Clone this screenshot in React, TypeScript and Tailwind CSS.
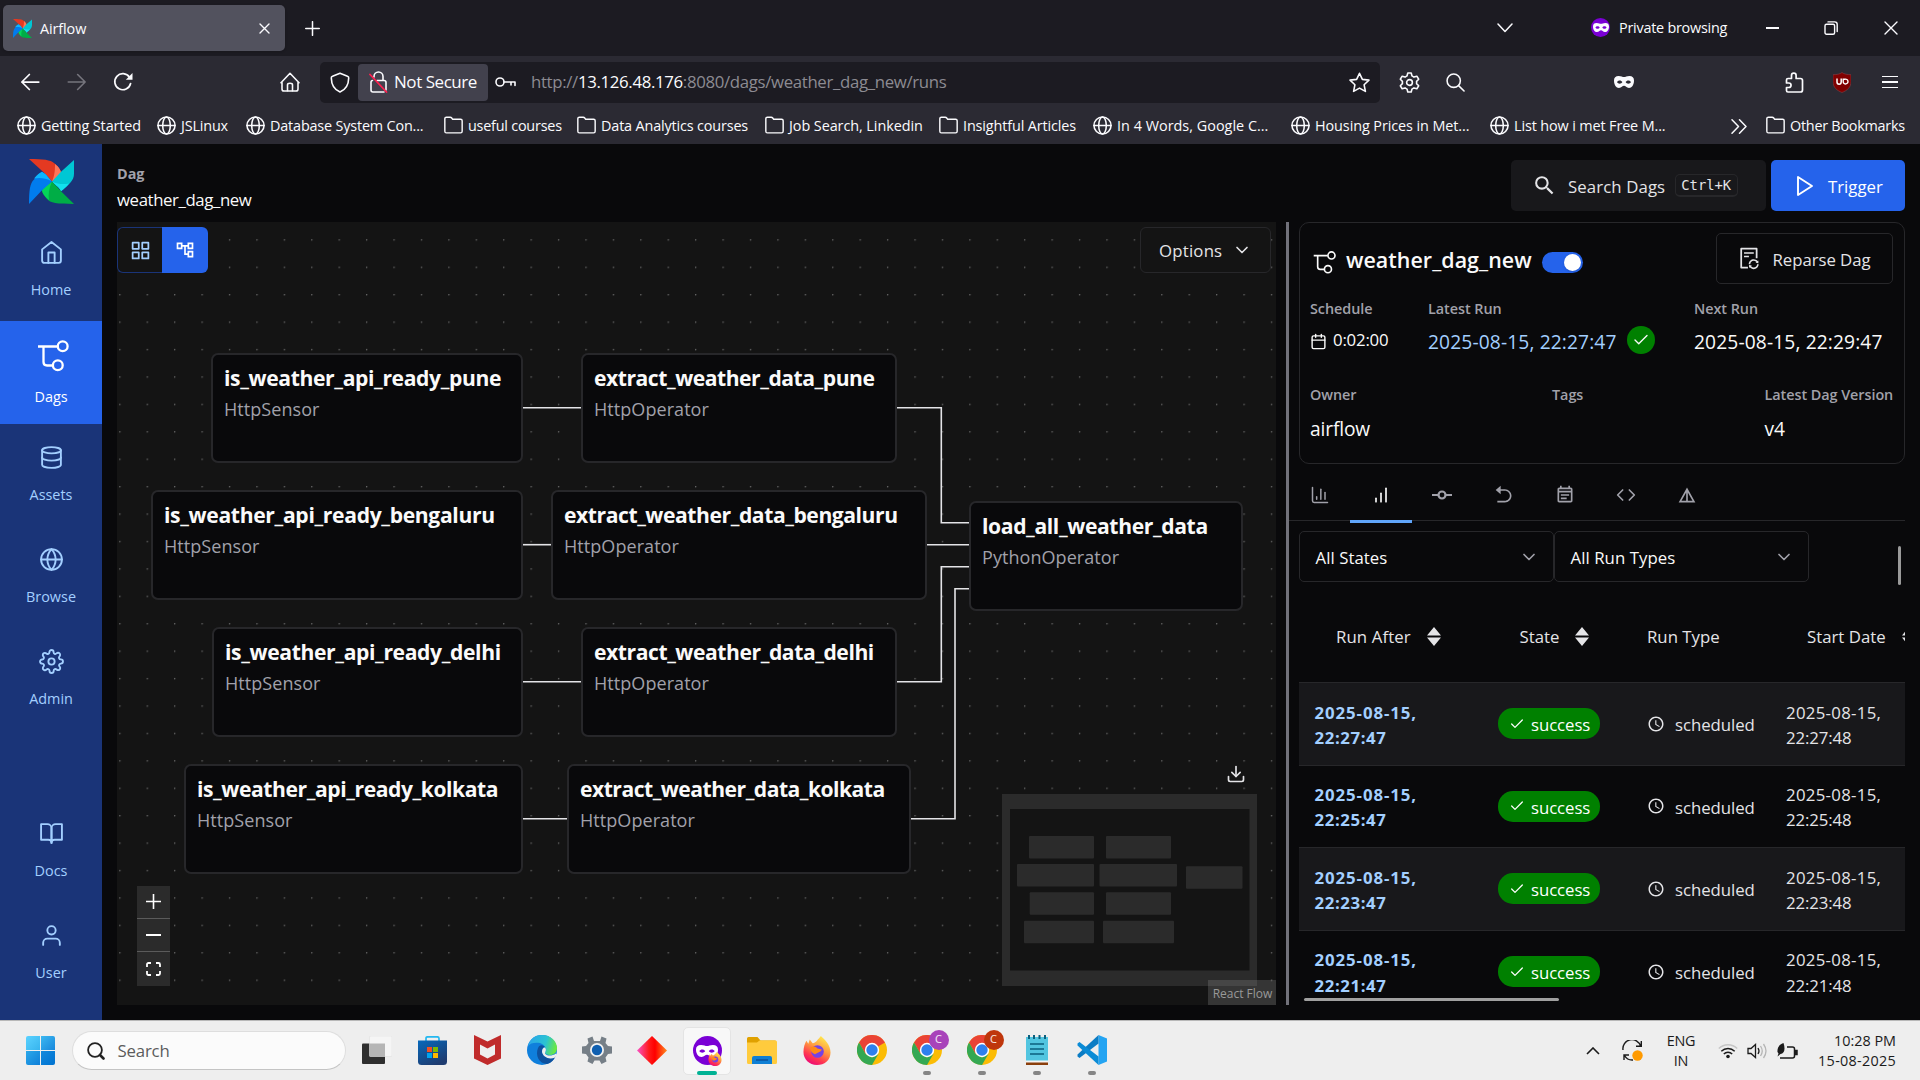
import type { ReactNode } from "react";
import {
  FiBarChart,
  FiBookOpen,
  FiCalendar,
  FiChevronDown,
  FiCode,
  FiDatabase,
  FiDownload,
  FiGlobe,
  FiGrid,
  FiHome,
  FiPlay,
  FiSettings,
  FiUser,
} from "react-icons/fi";
import { MdDetails, MdOutlineAccountTree, MdOutlineEventNote, MdSearch, MdOutlineSchedule } from "react-icons/md";
import { RiArrowGoBackFill } from "react-icons/ri";
import { AiOutlineFileSync } from "react-icons/ai";
import { LuChartColumn, LuCheck } from "react-icons/lu";

/* ---------- shared drawings ---------- */

function Pinwheel({ className }: { className: string }) {
  return (
    <svg viewBox="0 0 45 46" preserveAspectRatio="none" className={className}>
      <path d="M0 0C14 0 22 1 25 4C29 7 32 12 32 14C30 20 26 21 23 23L14 13Z" fill="#e43921" />
      <path d="M26 5C30 8 32 12 32 14C30 20 26 21 23 23C26 16 26 10 26 5Z" fill="#ff7557" />
      <path d="M45 1L45 15C45 22 40 26 32 33C30 28 25 26 23 23L32 13Z" fill="#00c7d4" />
      <path d="M40 25C38 28 34 31 32 33C30 28 25 26 23 23C29 26 35 26 40 25Z" fill="#11e1ee" />
      <path d="M45 46C28 46 21 45 18 41C15 37 13 34 13 32C16 26 20 26 23 23L32 33Z" fill="#00ad46" />
      <path d="M20 42C15 38 13 34 13 32C16 26 20 26 23 23C20 30 19 36 20 42Z" fill="#04d659" />
      <path d="M0 46C0 32 1 25 5 21C9 16 11 14 13 13C18 16 20 20 23 23L13 32Z" fill="#017cee" />
      <path d="M5 20C8 16 11 14 13 13C18 16 20 20 23 23C16 19 10 19 5 20Z" fill="#0cb6ff" />
    </svg>
  );
}

function DagGlyph({ className, stroke }: { className: string; stroke: number }) {
  return (
    <svg viewBox="0 0 32 32" className={className} fill="none" stroke="currentColor" strokeWidth={stroke}>
      <path d="M1 6.5H20.5M6.5 6.5V22Q6.5 25.5 10 25.5H16" />
      <circle cx="25.7" cy="6.2" r="4.9" />
      <circle cx="20.8" cy="25.3" r="4.9" />
    </svg>
  );
}

function MaskShape({ className }: { className: string }) {
  return (
    <svg viewBox="0 0 20 11" preserveAspectRatio="none" className={className} fill="currentColor" fillRule="evenodd">
      <path d="M4.6 0C1.6 0 0 1.4 0 4.2C0 8.4 2.2 11 5 11C7.6 11 8.4 9 10 9C11.6 9 12.4 11 15 11C17.8 11 20 8.4 20 4.2C20 1.4 18.4 0 15.4 0C12.8 0 11.4 1 10 1C8.6 1 7.2 0 4.6 0ZM3 5.6C4 3.6 7.2 3.4 8.4 5.6C7.2 7.8 4 7.6 3 5.6ZM17 5.6C16 3.6 12.8 3.4 11.6 5.6C12.8 7.8 16 7.6 17 5.6Z" />
    </svg>
  );
}

function Line({ className, box = "0 0 16 16", w = 1.25, children }: { className: string; box?: string; w?: number; children: ReactNode }) {
  return (
    <svg viewBox={box} className={className} fill="none" stroke="currentColor" strokeWidth={w} strokeLinecap="round" strokeLinejoin="round">
      {children}
    </svg>
  );
}

const GlobeIcon = () => (
  <Line className="h-[19px] w-[19px] shrink-0" w={1.3}>
    <circle cx="8" cy="8" r="7.2" />
    <ellipse cx="8" cy="8" rx="3.2" ry="7.2" />
    <path d="M0.8 8H15.2" />
  </Line>
);

const FolderIcon = () => (
  <Line className="h-[19px] w-[19px] shrink-0" w={1.2}>
    <path d="M0.7 12.8V2.2Q0.7 1 2 1H5.2Q6 1 6.5 1.7L7.3 2.8H14Q15.3 2.8 15.3 4.1V12.8Q15.3 14.2 14 14.2H2Q0.7 14.2 0.7 12.8Z" />
  </Line>
);

/* ---------- browser chrome ---------- */

function TabStrip() {
  return (
    <div className="flex h-[56px] items-center bg-[#1c1b22] text-[#fbfbfe]">
      <div className="ml-[3px] flex h-[46px] w-[282px] items-center rounded-[5px] bg-[#52525e] pl-[10px] shadow">
        <Pinwheel className="h-[19px] w-[19px]" />
        <span className="ml-[8px] pt-[1px] text-[14.4px] tracking-[-0.1px]">Airflow</span>
        <Line className="ml-auto mr-[15px] h-[11px] w-[11px]" box="0 0 11 11" w={1.4}>
          <path d="M1 1L10 10M10 1L1 10" />
        </Line>
      </div>
      <Line className="ml-[20px] h-[15px] w-[15px]" box="0 0 15 15" w={1.5}>
        <path d="M7.5 0.7V14.3M0.7 7.5H14.3" />
      </Line>
      <div className="ml-auto flex items-center">
        <Line className="mr-[78px] h-[10px] w-[16px]" box="0 0 16 10" w={1.5}>
          <path d="M1 1L8 8.5L15 1" />
        </Line>
        <div className="mr-[9px] flex h-[19px] w-[19px] items-center justify-center rounded-full bg-[#7a00d5]">
          <MaskShape className="h-[9px] w-[16px]" />
        </div>
        <span className="w-[147px] text-[14.4px] tracking-[-0.24px]">Private browsing</span>
        <div className="mr-[45px] h-[1.5px] w-[13px] bg-[#fbfbfe]" />
        <Line className="mr-[46px] h-[14px] w-[14px]" box="0 0 14 14" w={1.4}>
          <rect x="1" y="3.2" width="9.6" height="10" rx="1.5" />
          <path d="M4 0.9H10.6Q13.2 0.9 13.2 3.5V10.5" />
        </Line>
        <Line className="mr-[22px] h-[14px] w-[14px]" box="0 0 14 14" w={1.4}>
          <path d="M1 1L13 13M13 1L1 13" />
        </Line>
      </div>
    </div>
  );
}

function AddressRow() {
  return (
    <div className="flex h-[52px] items-center bg-[#2b2a33] text-[#fbfbfe]">
      <Line className="ml-[20px] h-[20px] w-[20px]" w={1.4}>
        <path d="M15 8H1.5M7.5 2L1.5 8L7.5 14" />
      </Line>
      <Line className="ml-[27px] h-[20px] w-[20px] text-[#76757d]" w={1.3}>
        <path d="M1 8H14.5M8.5 2L14.5 8L8.5 14" />
      </Line>
      <svg viewBox="0 0 20 20" className="ml-[26px] h-[20px] w-[20px]" fill="none" stroke="currentColor" strokeWidth="1.7">
        <path d="M17.6 11.5A8 8 0 1 1 16.5 5.3" strokeLinecap="round" />
        <path d="M19.5 1V7.8H12.8Z" fill="currentColor" stroke="none" />
      </svg>
      <Line className="ml-[147px] h-[20px] w-[20px]" w={1.25}>
        <path d="M1.6 8.4L1.6 13.5Q1.6 15.2 3.3 15.2H12.7Q14.4 15.2 14.4 13.5V8.4M0.8 8.6L8 1L15.2 8.6" />
        <path d="M6 15V10.2Q6 9 8 9Q10 9 10 10.2V15" />
      </Line>
      <div className="ml-[20px] flex h-[41px] w-[1060px] items-center rounded-[5px] bg-[#1c1b22]">
        <Line className="ml-[10px] h-[21px] w-[20px]" box="0 0 20 21" w={1.6}>
          <path d="M10 1.2L17.5 4.2Q18.8 4.6 18.7 6C18.6 12 16.5 17.3 10 20C3.5 17.3 1.4 12 1.3 6Q1.2 4.6 2.5 4.2Z" />
        </Line>
        <div className="ml-[8px] flex h-[37px] w-[130px] items-center rounded-[4px] bg-[#42414d] pl-[11px]">
          <Line className="h-[22px] w-[19px]" box="0 0 19 22" w={1.6}>
            <path d="M5 6V5.5A4.5 4.5 0 0 1 14 5.5V9M8 9.5H15Q17 9.5 17 11.5V19M15 21H4Q2 21 2 19V11.5Q2 9.5 3.5 9.5" />
            <path d="M1 3.5L17.5 21" stroke="#ff1f4f" strokeWidth="1.8" />
          </Line>
          <span className="ml-[6px] text-[17px] tracking-[-0.45px] whitespace-nowrap">Not Secure</span>
        </div>
        <Line className="ml-[7px] h-[12px] w-[21px]" box="0 0 21 12" w={1.6}>
          <circle cx="5" cy="6" r="4" />
          <path d="M9 6H20V9.5M16 6V9" />
        </Line>
        <span className="ml-[15px] text-[16.8px] tracking-[-0.33px] whitespace-nowrap text-[#8c8b92]">
          http://<span className="text-[#fbfbfe]">13.126.48.176</span>:8080/dags/weather_dag_new/runs
        </span>
        <Line className="ml-auto mr-[10px] h-[21px] w-[21px]" w={1.2}>
          <path d="M8 1L10.2 5.6L15.2 6.2L11.5 9.7L12.5 14.8L8 12.3L3.5 14.8L4.5 9.7L0.8 6.2L5.8 5.6Z" />
        </Line>
      </div>
      <Line className="ml-[19px] h-[21px] w-[21px]" w={1.2}>
        <path d="M6.7 0.8H9.3L9.9 3L11.4 3.9L13.6 3.2L15 5.5L13.4 7.1V8.9L15 10.5L13.6 12.8L11.4 12.1L9.9 13L9.3 15.2H6.7L6.1 13L4.6 12.1L2.4 12.8L1 10.5L2.6 8.9V7.1L1 5.5L2.4 3.2L4.6 3.9L6.1 3Z" />
        <circle cx="8" cy="8" r="2.2" />
      </Line>
      <Line className="ml-[26px] h-[19px] w-[19px]" w={1.3}>
        <circle cx="6.5" cy="6.5" r="5.6" />
        <path d="M10.6 10.6L15.2 15.2" />
      </Line>
      <MaskShape className="ml-[149px] h-[12px] w-[20px]" />
      <div className="ml-auto flex items-center">
        <Line className="h-[21px] w-[19px]" box="0 0 19 21" w={1.7}>
          <path d="M1.5 11V8Q1.5 6.5 3 6.5H6.5V3.5A2.3 2.3 0 0 1 11.1 3.5V6.5H15.5Q17.5 6.5 17.5 8.5V18Q17.5 20 15.5 20H3Q1.5 20 1.5 18.5V15.5H3.8A2.2 2.2 0 0 0 3.8 11H1.5Z" />
        </Line>
        <svg viewBox="0 0 18 20" className="ml-[29px] h-[21px] w-[18px]">
          <path d="M9 0C11 1.6 14.5 2.2 18 2.2V9C18 15 14 18 9 20C4 18 0 15 0 9V2.2C3.5 2.2 7 1.6 9 0Z" fill="#800000" stroke="#8f4a50" strokeWidth="0.5" />
          <path d="M4 6V9.6A2.1 2.1 0 0 0 8.2 9.6V6" fill="none" stroke="#fff" strokeWidth="1.5" />
          <path d="M10.2 6.7H12A2.4 2.4 0 1 1 10.2 9.3V6" fill="none" stroke="#fff" strokeWidth="1.4" />
        </svg>
        <div className="ml-[31px] mr-[22px] flex w-[16px] flex-col gap-[4px]">
          <div className="h-[1.5px] bg-[#fbfbfe]" />
          <div className="h-[1.5px] bg-[#fbfbfe]" />
          <div className="h-[1.5px] bg-[#fbfbfe]" />
        </div>
      </div>
    </div>
  );
}

const bookmarks = [
  { label: "Getting Started", folder: false, box: "w-[140px] tracking-[-0.12px]" },
  { label: "JSLinux", folder: false, box: "w-[89px] tracking-[-0.17px]" },
  { label: "Database System Con...", folder: false, box: "w-[198px] tracking-[-0.17px]" },
  { label: "useful courses", folder: true, box: "w-[133px] tracking-[-0.22px]" },
  { label: "Data Analytics courses", folder: true, box: "w-[188px] tracking-[-0.15px]" },
  { label: "Job Search, Linkedin", folder: true, box: "w-[174px] tracking-[-0.06px]" },
  { label: "Insightful Articles", folder: true, box: "w-[154px] tracking-[-0.12px]" },
  { label: "In 4 Words, Google C...", folder: false, box: "w-[198px] tracking-[0.02px]" },
  { label: "Housing Prices in Met...", folder: false, box: "w-[199px] tracking-[-0.08px]" },
  { label: "List how i met Free M...", folder: false, box: "w-[199px] tracking-[-0.12px]" },
];

function Bookmarks() {
  return (
    <div className="flex h-[36px] items-center bg-[#2b2a33] pl-[16.5px] text-[14.4px] text-[#fbfbfe]">
      {bookmarks.map((b) => (
        <div key={b.label} className={`flex shrink-0 items-center gap-[5.5px] whitespace-nowrap ${b.box}`}>
          {b.folder ? <FolderIcon /> : <GlobeIcon />}
          {b.label}
        </div>
      ))}
      <Line className="ml-auto mr-[19px] h-[15px] w-[16px]" box="0 0 16 15" w={1.5}>
        <path d="M1 0.8L7.5 7.5L1 14.2M8.5 0.8L15 7.5L8.5 14.2" />
      </Line>
      <div className="flex w-[154px] items-center gap-[5px] tracking-[-0.25px] whitespace-nowrap">
        <FolderIcon />
        Other Bookmarks
      </div>
    </div>
  );
}

/* ---------- sidebar ---------- */

function NavItem({ icon, label, active = false }: { icon: ReactNode; label: string; active?: boolean }) {
  return (
    <div className={`flex h-[102px] w-[102px] flex-col items-center text-[14.4px] ${active ? "text-white" : "text-[#a3cfff]"}`}>
      <div className={`flex items-center ${active ? "h-[68px]" : "h-[66px]"}`}>{icon}</div>
      <span className={active ? "leading-[16px]" : "-mt-[3.5px] leading-[16px]"}>{label}</span>
    </div>
  );
}

function Sidebar() {
  return (
    <nav className="flex w-[102px] shrink-0 flex-col bg-[#1a3478]">
      <div className="flex h-[75px] items-start pl-[29px] pt-[15px]">
        <Pinwheel className="h-[45px] w-[45px]" />
      </div>
      <NavItem icon={<FiHome className="h-[25px] w-[25px] stroke-[1.8]" />} label="Home" />
      <div className="flex h-[103px] flex-col bg-[#2563eb]">
        <NavItem active icon={<DagGlyph className="ml-[3px] mt-[1px] h-[32px] w-[32px]" stroke={2.3} />} label="Dags" />
      </div>
      <NavItem icon={<FiDatabase className="h-[25px] w-[25px] stroke-[1.8]" />} label="Assets" />
      <NavItem icon={<FiGlobe className="h-[25px] w-[25px] stroke-[1.8]" />} label="Browse" />
      <NavItem icon={<FiSettings className="h-[25px] w-[25px] stroke-[1.8]" />} label="Admin" />
      <div className="mt-auto flex flex-col pb-[16px]">
        <NavItem icon={<FiBookOpen className="h-[25px] w-[25px] stroke-[1.8]" />} label="Docs" />
        <NavItem icon={<FiUser className="h-[25px] w-[25px] stroke-[1.8]" />} label="User" />
      </div>
    </nav>
  );
}

/* ---------- page header ---------- */

function PageHeader() {
  return (
    <header className="flex h-[78px] items-start justify-between pl-[15px] pr-[15px]">
      <div className="flex flex-col pt-[18px]">
        <span className="text-[14.4px] leading-[24px] font-bold text-[#a1a1aa]">Dag</span>
        <span className="text-[16.8px] leading-[27px] tracking-[-0.4px] text-[#fafafa]">weather_dag_new</span>
      </div>
      <div className="flex gap-[5px] pt-[16px]">
        <div className="flex h-[51px] w-[255px] items-center rounded-[5px] bg-[#18181b] pl-[21px] text-[#e4e4e7]">
          <MdSearch className="h-[25px] w-[25px]" />
          <span className="ml-[11px] pt-[2px] text-[16.8px] tracking-[0.1px]">Search Dags</span>
          <kbd className="ml-[9.5px] flex h-[23px] w-[63px] items-center justify-center rounded-[5px] border border-b-2 border-[#27272a] font-['DejaVu_Sans_Mono',monospace] text-[13.8px]">
            Ctrl+K
          </kbd>
        </div>
        <div className="flex h-[51px] w-[134px] items-center rounded-[5px] bg-[#2563eb] pl-[22px] text-white">
          <FiPlay className="h-[24px] w-[24px] stroke-[1.9]" />
          <span className="ml-[11px] pt-[2px] text-[16.8px]">Trigger</span>
        </div>
      </div>
    </header>
  );
}

/* ---------- graph ---------- */

const nodes = [
  { id: "is_weather_api_ready_pune", op: "HttpSensor", pos: "left-[94px] top-[131px] w-[312px] tracking-[-0.36px]" },
  { id: "is_weather_api_ready_bengaluru", op: "HttpSensor", pos: "left-[34px] top-[268px] w-[372px] tracking-[-0.33px]" },
  { id: "is_weather_api_ready_delhi", op: "HttpSensor", pos: "left-[95px] top-[405px] w-[311px] tracking-[-0.36px]" },
  { id: "is_weather_api_ready_kolkata", op: "HttpSensor", pos: "left-[67px] top-[542px] w-[339px] tracking-[-0.42px]" },
  { id: "extract_weather_data_pune", op: "HttpOperator", pos: "left-[464px] top-[131px] w-[316px] tracking-[-0.46px]" },
  { id: "extract_weather_data_bengaluru", op: "HttpOperator", pos: "left-[434px] top-[268px] w-[376px] tracking-[-0.43px]" },
  { id: "extract_weather_data_delhi", op: "HttpOperator", pos: "left-[464px] top-[405px] w-[316px] tracking-[-0.43px]" },
  { id: "extract_weather_data_kolkata", op: "HttpOperator", pos: "left-[450px] top-[542px] w-[344px] tracking-[-0.5px]" },
  { id: "load_all_weather_data", op: "PythonOperator", pos: "left-[852px] top-[279px] w-[274px] tracking-[-0.37px]" },
];

const edges = [
  "M406 185.7H464",
  "M406 322.7H434",
  "M406 459.7H464",
  "M406 596.7H450",
  "M780 185.7H824.3V300.7H852",
  "M810 322.7H852",
  "M780 459.7H824.3V344.7H852",
  "M794 596.7H838V366.7H852",
];

const minimapNodes = [
  [27, 42, 65],
  [104, 42, 65],
  [15, 70, 77],
  [97.5, 70, 77.5],
  [184, 72.3, 56.5],
  [27.7, 98.3, 64.3],
  [104, 98.3, 65],
  [22, 126.8, 70],
  [101, 126.8, 71],
];

function Graph() {
  return (
    <section className="relative h-[783px] w-[1159px] shrink-0 overflow-hidden bg-[#141414]">
      <svg className="absolute inset-0 h-full w-full">
        <defs>
          <pattern id="dots" x="2.2" y="17.2" width="27.42" height="27.42" patternUnits="userSpaceOnUse">
            <circle cx="0.7" cy="0.7" r="0.7" fill="#777" />
          </pattern>
        </defs>
        <rect width="100%" height="100%" fill="url(#dots)" />
        {edges.map((d) => (
          <path key={d} d={d} fill="none" stroke="#e4e4e7" strokeWidth="1.6" />
        ))}
      </svg>
      {nodes.map((n) => (
        <div key={n.id} className={`absolute flex h-[110px] flex-col rounded-[7px] border-2 border-[#27272a] bg-[#09090b] pl-[11px] pt-[7px] whitespace-nowrap ${n.pos}`}>
          <span className="text-[21.1px] leading-[31px] font-bold text-[#fafafa]">{n.id}</span>
          <span className="pt-[1px] text-[18px] leading-[31px] tracking-[0.06px] text-[#a1a1aa]">{n.op}</span>
        </div>
      ))}

      {/* view switch and options float over the canvas */}
      <div className="absolute top-[5px] left-0 flex h-[46px] w-[91px]">
        <div className="flex w-[45px] items-center justify-center rounded-l-[6px] border border-r-0 border-[#1a3478] bg-[#141414] text-[#a3cfff]">
          <FiGrid className="h-[21px] w-[21px]" />
        </div>
        <div className="flex w-[46px] items-center justify-center rounded-r-[6px] bg-[#2563eb] text-white">
          <MdOutlineAccountTree className="h-[20px] w-[20px]" />
        </div>
      </div>
      <div className="absolute top-[5px] left-[1023px] flex h-[46px] w-[131px] items-center rounded-[6px] border border-[#27272a] bg-[#141414] pl-[18px] text-[#e4e4e7]">
        <span className="pt-[1px] text-[16.8px] tracking-[0.2px]">Options</span>
        <FiChevronDown className="ml-[10px] h-[20px] w-[20px]" />
      </div>

      <div className="absolute top-[664px] left-[20px] flex w-[33px] flex-col bg-[#2b2b2b] text-white">
        <div className="flex h-[33px] items-center justify-center border-b border-[#5b5b5b] pb-[1px]">
          <svg viewBox="0 0 15 15" className="h-[15px] w-[15px] fill-current">
            <path d="M6.7 0H8.3V6.7H15V8.3H8.3V15H6.7V8.3H0V6.7H6.7Z" />
          </svg>
        </div>
        <div className="flex h-[33px] items-center justify-center border-b border-[#5b5b5b]">
          <div className="h-[2px] w-[15px] bg-white" />
        </div>
        <div className="flex h-[34px] items-center justify-center">
          <svg viewBox="0 0 15 14" className="h-[14px] w-[15px]" fill="none" stroke="currentColor" strokeWidth="1.8">
            <path d="M1 5V2.5Q1 1 2.5 1H5M10 1H12.5Q14 1 14 2.5V5M14 9V11.5Q14 13 12.5 13H10M5 13H2.5Q1 13 1 11.5V9" />
          </svg>
        </div>
      </div>

      <FiDownload className="absolute top-[542px] left-[1109px] h-[20px] w-[20px] text-[#e4e4e7]" />
      <svg viewBox="0 0 255 192" className="absolute top-[572px] left-[885px] h-[192px] w-[255px]">
        <rect width="255" height="192" fill="#2b2b2b" />
        <rect x="8" y="15" width="239.5" height="161.5" fill="#141414" />
        {minimapNodes.map(([x, y, w]) => (
          <rect key={`${x}-${y}`} x={x} y={y} width={w} height="22.5" rx="1" fill="#2b2b2b" />
        ))}
      </svg>
      <div className="absolute right-0 bottom-0 flex h-[25px] w-[68px] items-center justify-center bg-[#969696]/25 pt-[2px] pl-[1px] text-[12px] text-[#999]">React Flow</div>
    </section>
  );
}

/* ---------- details panel ---------- */

function Stat({ label, box, children }: { label: string; box: string; children?: ReactNode }) {
  return (
    <div className={`flex flex-col whitespace-nowrap ${box}`}>
      <span className="text-[14.4px] leading-[20px] font-semibold tracking-[-0.05px] text-[#a1a1aa]">{label}</span>
      {children}
    </div>
  );
}

function DagCard() {
  return (
    <div className="ml-[10px] h-[242px] w-[606px] rounded-[10px] border border-[#27272a] text-[#fafafa]">
      <div className="flex h-[71px] items-center pl-[13px] pr-[11px]">
        <DagGlyph className="mt-[8px] h-[23px] w-[23px]" stroke={2.3} />
        <h2 className="ml-[10px] pt-[3px] text-[21.4px] font-semibold tracking-[0.05px]">weather_dag_new</h2>
        <div className="mt-[8px] ml-[10px] flex h-[21px] w-[41px] justify-end rounded-full bg-[#2563eb] p-[2px]">
          <div className="h-[17px] w-[17px] rounded-full bg-white shadow" />
        </div>
        <div className="ml-auto flex h-[51px] w-[177px] items-center rounded-[5px] border border-[#27272a] pl-[20px] text-[#e4e4e7]">
          <AiOutlineFileSync className="h-[25px] w-[25px]" />
          <span className="ml-[10.5px] pt-[2px] text-[16.8px] tracking-[-0.05px] whitespace-nowrap">Reparse Dag</span>
        </div>
      </div>
      <div className="flex h-[87px] pt-[5px] pl-[10px]">
        <Stat label="Schedule" box="w-[118px]">
          <div className="flex h-[42px] items-center">
            <FiCalendar className="mt-[3px] h-[17px] w-[17px]" />
            <span className="ml-[6px] text-[16.8px] tracking-[-0.2px]">0:02:00</span>
          </div>
        </Stat>
        <Stat label="Latest Run" box="w-[266px]">
          <div className="flex h-[42px] items-center">
            <span className="mt-[4px] text-[19.2px] tracking-[0.13px] text-[#a3cfff]">2025-08-15, 22:27:47</span>
            <div className="ml-[10px] flex h-[28px] w-[28px] items-center justify-center rounded-full bg-[#008000]">
              <LuCheck className="h-[18px] w-[18px] stroke-[1.8]" />
            </div>
          </div>
        </Stat>
        <Stat label="Next Run" box="w-[200px]">
          <span className="pt-[10px] text-[19.2px] leading-[25px] tracking-[0.13px]">2025-08-15, 22:29:47</span>
        </Stat>
      </div>
      <div className="flex pt-[4px] pl-[10px]">
        <Stat label="Owner" box="w-[242px]">
          <span className="pt-[11px] text-[19.2px] leading-[25px] tracking-[-0.15px]">airflow</span>
        </Stat>
        <Stat label="Tags" box="w-[212.5px]" />
        <Stat label="Latest Dag Version" box="w-[130px]">
          <span className="pt-[11px] text-[19.2px] leading-[25px]">v4</span>
        </Stat>
      </div>
    </div>
  );
}

const CommitIcon = () => (
  <svg viewBox="0 0 20 20" className="h-[20px] w-[20px]" fill="none" stroke="currentColor" strokeWidth="2.2">
    <path d="M0 10H6.300M13.700 10H20" />
    <circle cx="10" cy="10" r="3.500" />
  </svg>
);

const tabIcons = [
  { key: "overview", icon: <LuChartColumn className="h-[20px] w-[20px] stroke-[1.8]" /> },
  { key: "runs", icon: <FiBarChart className="h-[20px] w-[20px]" /> },
  { key: "tasks", icon: <CommitIcon /> },
  { key: "backfills", icon: <RiArrowGoBackFill className="h-[20px] w-[20px]" /> },
  { key: "events", icon: <MdOutlineEventNote className="h-[20px] w-[20px]" /> },
  { key: "code", icon: <FiCode className="h-[20px] w-[20px]" /> },
  { key: "details", icon: <MdDetails className="h-[20px] w-[20px]" /> },
];

function Tabs() {
  return (
    <div className="flex h-[57px] w-[616px] border-b border-[#27272a]">
      {tabIcons.map((t) => (
        <div
          key={t.key}
          className={
            t.key === "runs"
              ? "flex h-[59px] w-[61.3px] items-center justify-center border-b-[3px] border-[#60a5fa] pt-[5px] text-[#fafafa]"
              : "flex h-[59px] w-[61.3px] items-center justify-center pt-[2px] text-[#a1a1aa]"
          }
        >
          {t.icon}
        </div>
      ))}
    </div>
  );
}

function SelectBox({ label }: { label: string }) {
  return (
    <div className="flex h-[51px] w-[255px] items-center rounded-[5px] border border-[#27272a] pr-[14px] pl-[15.5px] text-[16.8px] tracking-[0.05px] text-[#fafafa]">
      <span className="pt-[2px]">{label}</span>
      <FiChevronDown className="ml-auto h-[20px] w-[20px] text-[#a1a1aa]" />
    </div>
  );
}

function SortArrows() {
  return (
    <svg viewBox="0 0 14 19" className="h-[19px] w-[14px] shrink-0 fill-[#e4e4e7]">
      <path d="M7 0L14 8.5H0ZM7 19L14 10.5H0Z" />
    </svg>
  );
}

const runs = ["22:27:4", "22:25:4", "22:23:4", "22:21:4"];

function RunsTable() {
  return (
    <div className="ml-[10px] h-[420px] w-[606px] overflow-hidden text-[16.8px] text-[#e4e4e7]">
      <div className="flex h-[100px] w-[700px] items-center pt-[8px] whitespace-nowrap">
        <div className="flex w-[184px] items-center pl-[37px]">
          <span className="w-[91px] pt-[1px] tracking-[0.1px]">Run After</span>
          <SortArrows />
        </div>
        <div className="flex w-[164px] items-center pl-[36.5px]">
          <span className="w-[55.5px] pt-[1px]">State</span>
          <SortArrows />
        </div>
        <span className="w-[160px] pt-[1px]">Run Type</span>
        <span className="w-[94.5px] pt-[1px]">Start Date</span>
        <SortArrows />
      </div>
      {runs.map((r, i) => (
        <div key={r} className={`flex h-[82.6px] w-[606px] items-center border-t border-[#27272a] leading-[25.2px] ${i % 2 === 0 ? "bg-[#18181b]" : ""}`}>
          <div className="w-[199px] pl-[15.5px] pt-[2px] font-bold text-[#a3cfff]">
            <div className="tracking-[0.92px]">2025-08-15,</div>
            <div className="tracking-[0.6px]">{r}7</div>
          </div>
          <div className="w-[149px]">
            <div className="flex h-[31px] w-[102px] items-center rounded-[15px] bg-[#008000] pl-[11px] text-white">
              <LuCheck className="h-[16px] w-[16px] stroke-[1.9]" />
              <span className="ml-[6px] pt-[2px] tracking-[-0.08px]">success</span>
            </div>
          </div>
          <div className="flex w-[139px] items-center">
            <MdOutlineSchedule className="h-[18px] w-[18px]" />
            <span className="ml-[10px] pt-[2px] tracking-[-0.06px]">scheduled</span>
          </div>
          <div className="pt-[2px] whitespace-nowrap">
            <div className="tracking-[0.3px]">2025-08-15,</div>
            <div className="tracking-[-0.1px]">{r}8</div>
          </div>
        </div>
      ))}
    </div>
  );
}

function DetailsPanel() {
  return (
    <aside className="relative flex h-[783px] w-[621px] flex-col overflow-hidden">
      <DagCard />
      <Tabs />
      <div className="mt-[10px] ml-[10px] flex">
        <SelectBox label="All States" />
        <SelectBox label="All Run Types" />
      </div>
      <RunsTable />
      <div className="absolute top-[324px] left-[609px] h-[39px] w-[3px] rounded-full bg-[#9a9a9a]" />
      <div className="absolute top-[776px] left-[15px] h-[3px] w-[255px] rounded-full bg-[#a0a0a0]" />
    </aside>
  );
}

/* ---------- taskbar ---------- */

function ChromeLogo() {
  return (
    <svg viewBox="0 0 30 30" className="h-[30px] w-[30px]">
      <circle cx="15" cy="15" r="15" fill="#fbbc05" />
      <path d="M15 15L28 7.5A15 15 0 0 0 2 7.5L8.5 18.8Z" fill="#ea4335" />
      <path d="M2 7.5A15 15 0 0 0 15 30L21.5 18.8L15 22.5L8.5 18.8Z" fill="#34a853" />
      <circle cx="15" cy="15" r="7.2" fill="#fff" />
      <circle cx="15" cy="15" r="5.7" fill="#2f80ed" />
    </svg>
  );
}

function FirefoxLogo({ className }: { className: string }) {
  return (
    <svg viewBox="0 0 28 30" className={className}>
      <defs>
        <linearGradient id="ff" x1="0.8" y1="0" x2="0.3" y2="1">
          <stop offset="0" stopColor="#fff44f" />
          <stop offset="0.45" stopColor="#ff9640" />
          <stop offset="0.75" stopColor="#ff3750" />
          <stop offset="1" stopColor="#eb0878" />
        </linearGradient>
      </defs>
      <path d="M18 0C22 4 28 9 28 17C28 25 21.5 30 14 30C6 30 0 24 0 16.5C0 12 1.5 7.5 3 5L5 8L6.5 3.5L9.5 7.5C13 7 14.5 4 18 0Z" fill="url(#ff)" />
      <circle cx="14.5" cy="16" r="6.5" fill="#7542e5" />
      <path d="M7 12C10 10 13 11 14.5 13L19 14C18 17 14 17 12 19C9 18 7 16 7 12Z" fill="#ff8a16" />
    </svg>
  );
}

function TaskSlot({ children, running = false, badge, badgeColor = "" }: { children: ReactNode; running?: boolean; badge?: string; badgeColor?: string }) {
  return (
    <div className="relative flex h-[48px] w-[55px] shrink-0 items-center justify-center pb-[1px]">
      {children}
      {badge && <div className={`absolute top-[3px] left-[29px] flex h-[20px] w-[20px] items-center justify-center rounded-full text-[11px] text-white/90 ${badgeColor}`}>{badge}</div>}
      {running && <div className="absolute bottom-[0px] left-[23.5px] h-[4px] w-[8px] rounded-full bg-[#858585]" />}
    </div>
  );
}

function Taskbar() {
  return (
    <footer className="flex h-[60px] items-center border-t border-[#b8b8b8] bg-[#eee] text-[#1b1b1b]">
      <div className="ml-[26px] grid h-[29px] w-[29px] grid-cols-2 gap-[1px]">
        <div className="rounded-tl-[2px] bg-linear-to-br from-[#5ad2ff] to-[#36b4ee]" />
        <div className="rounded-tr-[2px] bg-linear-to-br from-[#3cb8f0] to-[#1787dc]" />
        <div className="rounded-bl-[2px] bg-linear-to-br from-[#2ba8ea] to-[#0f7fd8]" />
        <div className="rounded-br-[2px] bg-linear-to-br from-[#1389dd] to-[#0072d0]" />
      </div>
      <div className="ml-[17px] flex h-[39px] w-[274px] items-center rounded-full border border-[#dedede] border-b-[#c4c4c4] bg-[#fbfbfb] pl-[14px]">
        <svg viewBox="0 0 18 18" className="h-[18px] w-[18px]" fill="none" stroke="#222" strokeLinecap="round">
          <circle cx="8" cy="8" r="6.9" strokeWidth="1.8" />
          <path d="M13 13L16.5 16.5" strokeWidth="2.6" />
        </svg>
        <span className="ml-[12.5px] text-[16.8px] tracking-[-0.18px] text-[#5c5c5c]">Search</span>
      </div>
      <div className="ml-[3.5px] flex items-center">
        <TaskSlot>
          <svg viewBox="0 0 30 28" className="h-[28px] w-[30px]">
            <rect x="0" y="7.5" width="23" height="20.5" rx="1" fill="#2e2e2e" />
            <rect x="7.5" y="0" width="22.5" height="20.5" rx="1" fill="#f5f5f5" stroke="#ddd" strokeWidth="0.5" />
            <path d="M7.5 7.5H23V20.5H7.5Z" fill="#b5b5b5" />
          </svg>
        </TaskSlot>
        <TaskSlot>
          <svg viewBox="0 0 29 29" className="h-[29px] w-[29px]">
            <defs>
              <linearGradient id="st" x1="0" y1="0" x2="0.6" y2="1">
                <stop offset="0" stopColor="#0669bc" />
                <stop offset="1" stopColor="#1f3c70" />
              </linearGradient>
            </defs>
            <path d="M8 6V2.5Q8 0.8 9.7 0.8H19.3Q21 0.8 21 2.5V6" fill="none" stroke="#24b8f0" strokeWidth="1.7" />
            <path d="M0 4.5H29V25.5Q29 29 25.5 29H3.5Q0 29 0 25.5Z" fill="url(#st)" />
            <rect x="9" y="11" width="5" height="5" fill="#f25022" />
            <rect x="15" y="11" width="5" height="5" fill="#7fba00" />
            <rect x="9" y="17" width="5" height="5" fill="#00a4ef" />
            <rect x="15" y="17" width="5" height="5" fill="#ffb900" />
          </svg>
        </TaskSlot>
        <TaskSlot>
          <svg viewBox="0 0 27 30" className="h-[30px] w-[27px]">
            <path d="M0 0L13.5 6.5L27 0V23.5L13.5 30L0 23.5ZM6 9.5V19.5L13.5 23.5L21 19.5V9.5L13.5 13.5Z" fill="#c02b2b" fillRule="evenodd" />
          </svg>
        </TaskSlot>
        <TaskSlot>
          <svg viewBox="0 0 30 30" className="h-[30px] w-[30px]">
            <defs>
              <linearGradient id="eg" x1="0" y1="0.3" x2="1" y2="0.5">
                <stop offset="0" stopColor="#2aa5ea" />
                <stop offset="0.6" stopColor="#2bc3d2" />
                <stop offset="1" stopColor="#6bea3d" />
              </linearGradient>
            </defs>
            <circle cx="15" cy="15" r="15" fill="#0f7fdc" />
            <path d="M1 11C3 3 9 0 15 0C24 0 30 6.5 30 13C30 17.5 27 20 23 20C20 20 18 19 18 17.5C20 16 19 10 13 8C8 7 3 8 1 11Z" fill="url(#eg)" />
            <path d="M11 13C8 20 12 29 20 29C24 28 27 25 28 22C22 25 16 22 15 17C15 14 16 12 18 12C15 9 12 10 11 13Z" fill="#0e519e" />
            <path d="M15 17C15 14 16 12.5 18 12.5C20 15 18 17 18 18.5C19 21 25 21.5 29 18.5L30 20L28 22.5C22 25 16 22 15 17Z" fill="#eee" />
          </svg>
        </TaskSlot>
        <TaskSlot>
          <svg viewBox="0 0 30 28" className="h-[28px] w-[30px]">
            <path d="M12 5L10.5 0.5L5.5 2.5L6.5 7L4 10L0 10.5V17.5L4 18L6.5 21.5L5.5 25.5L10.5 28L12.5 24.5H17.5L19.5 28L24.5 25.5L23.5 21.5L26 18L30 17.5V10.5L26 10L23.5 7L24.5 2.5L19.5 0.5L18 5Z" fill="#767f87" />
            <circle cx="15" cy="14" r="7" fill="#f2f2f2" />
            <circle cx="15" cy="14" r="5.2" fill="#0f5fb0" />
          </svg>
        </TaskSlot>
        <TaskSlot>
          <svg viewBox="0 0 30 29" className="h-[29px] w-[30px]">
            <defs>
              <linearGradient id="dm">
                <stop offset="0" stopColor="#f953c6" />
                <stop offset="0.4" stopColor="#ff1a1a" />
                <stop offset="0.6" stopColor="#ff0000" />
                <stop offset="1" stopColor="#ff8a1f" />
              </linearGradient>
            </defs>
            <path d="M15 0L30 14.5L15 29L0 14.5Z" fill="url(#dm)" />
          </svg>
        </TaskSlot>
        <div className="relative mx-[3.5px] flex h-[48px] w-[48px] items-center justify-center rounded-[5px] border border-[#e4e4e4] bg-[#f8f8f8] text-white">
          <div className="flex h-[29px] w-[29px] items-center justify-center rounded-full bg-[#7a00d5]">
            <MaskShape className="h-[12px] w-[22px]" />
          </div>
          <FirefoxLogo className="absolute top-[24px] left-[24px] h-[14px] w-[14px]" />
          <div className="absolute bottom-[-1px] left-[13px] h-[4px] w-[20px] rounded-full bg-[#00b294]" />
        </div>
        <TaskSlot>
          <svg viewBox="0 0 30 27" className="h-[27px] w-[30px]">
            <path d="M0 1.5Q0 0 1.5 0H10.5L13.5 3.5H28.5V10H0Z" fill="#e0a100" />
            <path d="M0 5.5H10L12.5 3.5H28.5Q30 3.5 30 5V25.5Q30 27 28.5 27H1.5Q0 27 0 25.5Z" fill="#ffcb3d" />
            <path d="M5 27V21Q5 19 7 19H23Q25 19 25 21V27Z" fill="#0f7fd4" />
            <path d="M9 23H21" stroke="#0a4a94" strokeWidth="1.3" />
          </svg>
        </TaskSlot>
        <TaskSlot>
          <FirefoxLogo className="h-[29px] w-[28px]" />
        </TaskSlot>
        <TaskSlot>
          <ChromeLogo />
        </TaskSlot>
        <TaskSlot running badge="C" badgeColor="bg-[#a843ba]">
          <ChromeLogo />
        </TaskSlot>
        <TaskSlot running badge="C" badgeColor="bg-[#bf360c]">
          <ChromeLogo />
        </TaskSlot>
        <TaskSlot running>
          <svg viewBox="0 0 22 30" className="h-[30px] w-[22px]">
            <path d="M0 2H22V27H0Z" fill="#52c5e0" />
            <path d="M0 26.5H22V30H0Z" fill="#8a3f0c" />
            <path d="M0 25.5H22V27.5H0Z" fill="#f4f4f4" />
            <path d="M3 0V4M8 0V4M13.5 0V4M19 0V4" stroke="#0b5f7d" strokeWidth="2" />
            <path d="M4 9H18M4 14H18M4 19H18" stroke="#0b5f7d" strokeWidth="1.6" />
          </svg>
        </TaskSlot>
        <TaskSlot running>
          <svg viewBox="0 0 30 30" className="h-[30px] w-[30px]">
            <path d="M21.5 0L30 3.5V26.5L21.5 30V21.5L21.5 8.5Z" fill="#24a4f2" />
            <path d="M21.5 8.5V0L0.5 19.5V21.5L2.5 23Z" fill="#0b7cc4" />
            <path d="M21.5 21.5V30L0.5 10.5V8.5L2.5 7Z" fill="#0a8bd6" />
          </svg>
        </TaskSlot>
      </div>

      <div className="ml-auto flex items-center pr-[24px]">
        <svg viewBox="0 0 14 8" className="mr-[22px] h-[8px] w-[14px]" fill="none" stroke="currentColor" strokeWidth="1.6">
          <path d="M1 7L7 1L13 7" />
        </svg>
        <svg viewBox="0 0 21 21" className="mr-[20px] h-[21px] w-[21px]" fill="none" stroke="currentColor" strokeWidth="1.4">
          <path d="M1 10A9 9 0 0 1 18.5 6M19.3 1V6.3H14M2 20V15H7M2.5 15.5A9 9 0 0 0 11 20" />
          <circle cx="15.5" cy="15.5" r="5.2" fill="#ff9a00" stroke="none" />
        </svg>
        <div className="mr-[19px] flex w-[36px] flex-col items-center text-[14.4px] leading-[20px] tracking-[-0.2px]">
          <span>ENG</span>
          <span>IN</span>
        </div>
        <svg viewBox="0 0 20 16" className="mr-[9px] h-[16px] w-[20px]" fill="none" stroke="currentColor" strokeWidth="1.4">
          <path d="M0.8 5.5A13 13 0 0 1 19.2 5.5" stroke="#c6c6c6" />
          <path d="M3.3 8.2A9.6 9.6 0 0 1 16.7 8.2M5.8 10.9A6 6 0 0 1 14.2 10.9" />
          <circle cx="10" cy="13.5" r="1.8" fill="currentColor" stroke="none" />
        </svg>
        <svg viewBox="0 0 21 16" className="mr-[9px] h-[16px] w-[21px]" fill="none" stroke="currentColor" strokeWidth="1.3">
          <path d="M1 5.5H4L8.5 1.5V14.5L4 10.5H1Z" />
          <path d="M11 5Q13 8 11 11" />
          <path d="M13.5 3Q17 8 13.5 13M16.5 1Q21.5 8 16.5 15" stroke="#b5b5b5" />
        </svg>
        <svg viewBox="0 0 21 16" className="mr-[18px] h-[16px] w-[21px]" fill="none" stroke="currentColor" strokeWidth="1.5">
          <path d="M10 4H15.5Q17.5 4 17.5 6V13Q17.5 15 15.5 15H3" />
          <path d="M18 7.5H20V11.5H18Z" fill="currentColor" />
          <path d="M6.5 0C3 1 0 4 0.5 9L1.5 10.5L0.5 13.5L3.5 11C7.5 10.5 8.5 6 6.5 0Z" fill="currentColor" stroke="none" />
        </svg>
        <div className="flex w-[80px] flex-col items-end text-[14.4px] leading-[20px]">
          <span>10:28 PM</span>
          <span className="tracking-[0.28px]">15-08-2025</span>
        </div>
      </div>
    </footer>
  );
}

export default function App() {
  return (
    <div className="flex h-[1080px] w-[1920px] flex-col overflow-hidden bg-[#09090b] font-['Open_Sans','Noto_Sans',sans-serif]">
      <TabStrip />
      <AddressRow />
      <Bookmarks />
      <div className="flex h-[876px]">
        <Sidebar />
        <main className="flex w-[1818px] flex-col">
          <PageHeader />
          <div className="flex pl-[15px]">
            <Graph />
            <div className="ml-[10px] h-[783px] w-[3px] shrink-0 bg-[#71717a]" />
            <DetailsPanel />
          </div>
        </main>
      </div>
      <Taskbar />
    </div>
  );
}
